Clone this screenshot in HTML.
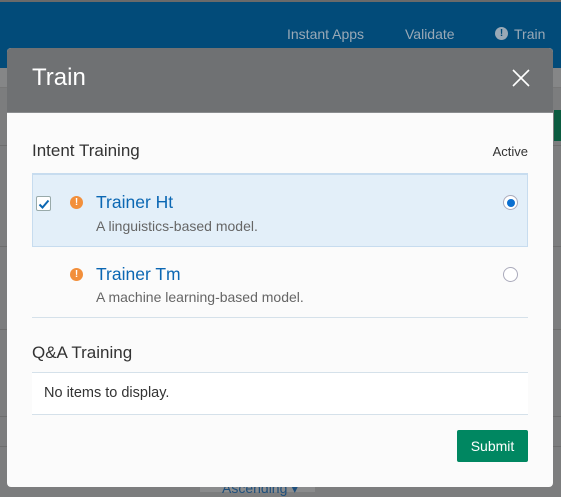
<!DOCTYPE html>
<html><head><meta charset="utf-8"><style>
*{margin:0;padding:0;box-sizing:border-box}
body{width:561px;height:492px;overflow:hidden;background:#7c7d7e;font-family:"Liberation Sans",sans-serif;position:relative}
.top{position:absolute;left:0;top:0;width:561px;height:68px;background:#024b79;border-top:2px solid #6a6a6a}
.nav{position:absolute;top:26px;font-size:14px;color:#9aa9b6}
.band{position:absolute;left:0;top:68px;width:561px;height:20px;background:#858687;border-bottom:1px solid #777}
.line{position:absolute;left:0;width:561px;height:1px;background:#6e6e6e}
.modal{position:absolute;left:7px;top:48px;width:546px;height:439px;background:#fbfbfb;border-radius:4px;overflow:hidden}
.hdr{height:65px;background:#6f7173;border-bottom:1px solid #8b8d8f;position:relative}
.hdr h1{position:absolute;left:25px;top:16px;font-size:24px;font-weight:normal;color:#fff}
.abs{position:absolute}
.h2{font-size:17px;color:#333}
.t{font-size:17.5px;color:#0b67b3}
.s{font-size:14px;color:#666}
.ex{position:absolute;width:13px;height:13px;border-radius:50%;background:#f28f3b;color:#fff;font-size:10px;font-weight:bold;text-align:center;line-height:13px}
</style></head><body>
<div class="top"></div>
<div class="nav" style="left:287px">Instant Apps</div>
<div class="nav" style="left:405px">Validate</div>
<div class="abs" style="left:495px;top:27px;width:13px;height:13px;border-radius:50%;background:#9aa9b6;color:#024b79;font-size:10px;font-weight:bold;text-align:center;line-height:13px">!</div>
<div class="nav" style="left:514px">Train</div>
<div class="band"></div>
<div class="line" style="top:145px"></div>
<div class="line" style="top:246px"></div>
<div class="line" style="top:329px"></div>
<div class="line" style="top:416px"></div>
<div class="line" style="top:446px"></div>
<div class="abs" style="left:554px;top:110px;width:7px;height:31px;background:#0b5b40"></div>
<div class="abs" style="left:200px;top:470px;width:115px;height:22px;background:#8b8c8d"></div>
<div class="abs" style="left:222px;top:480px;font-size:14px;color:#1e4f7c">Ascending ▾</div>
<div class="modal">
 <div class="hdr"><h1>Train</h1>
  <svg class="abs" style="left:505px;top:21px" width="18" height="18"><path d="M1 1L17 17M17 1L1 17" stroke="#fff" stroke-width="1.6"/></svg>
 </div>
 <div class="abs h2" style="left:25px;top:93px">Intent Training</div>
 <div class="abs" style="left:421px;width:100px;text-align:right;top:96px;font-size:13px;color:#333">Active</div>
 <div class="abs" style="left:25px;top:125px;width:496px;height:74px;background:#e3eff9;border:1px solid #c7dcef;border-top:2px solid #c7dcef"></div>
 <div class="abs" style="left:29px;top:148px;width:15px;height:15px;background:#fff;border:1px solid #9aa;border-radius:2px"></div>
 <svg class="abs" style="left:31px;top:150px" width="12" height="12"><path d="M1.5 6.5L4.5 9.5L10.5 2.5" stroke="#0b67b3" stroke-width="2" fill="none"/></svg>
 <div class="ex" style="left:63px;top:148px">!</div>
 <div class="abs t" style="left:89px;top:144px">Trainer Ht</div>
 <div class="abs s" style="left:89px;top:170px">A linguistics-based model.</div>
 <div class="abs" style="left:496px;top:147px;width:15px;height:15px;border-radius:50%;background:#fff;border:1px solid #aab"></div>
 <div class="abs" style="left:500px;top:151px;width:8px;height:8px;border-radius:50%;background:#0b6fd0"></div>
 <div class="ex" style="left:63px;top:220px">!</div>
 <div class="abs t" style="left:89px;top:216px">Trainer Tm</div>
 <div class="abs s" style="left:89px;top:241px">A machine learning-based model.</div>
 <div class="abs" style="left:496px;top:219px;width:15px;height:15px;border-radius:50%;background:#fff;border:1px solid #aab"></div>
 <div class="abs" style="left:25px;top:269px;width:496px;height:1px;background:#d5e1ea"></div>
 <div class="abs h2" style="left:25px;top:295px">Q&amp;A Training</div>
 <div class="abs" style="left:25px;top:324px;width:496px;height:43px;background:#fff;border-top:1px solid #d5e1ea;border-bottom:1px solid #d5e1ea"></div>
 <div class="abs" style="left:37px;top:337px;font-size:14.5px;color:#333">No items to display.</div>
 <div class="abs" style="left:450px;top:382px;width:71px;height:32px;background:#008761;border-radius:2px;color:#fff;font-size:14px;text-align:center;line-height:32px">Submit</div>
</div>
</body></html>
